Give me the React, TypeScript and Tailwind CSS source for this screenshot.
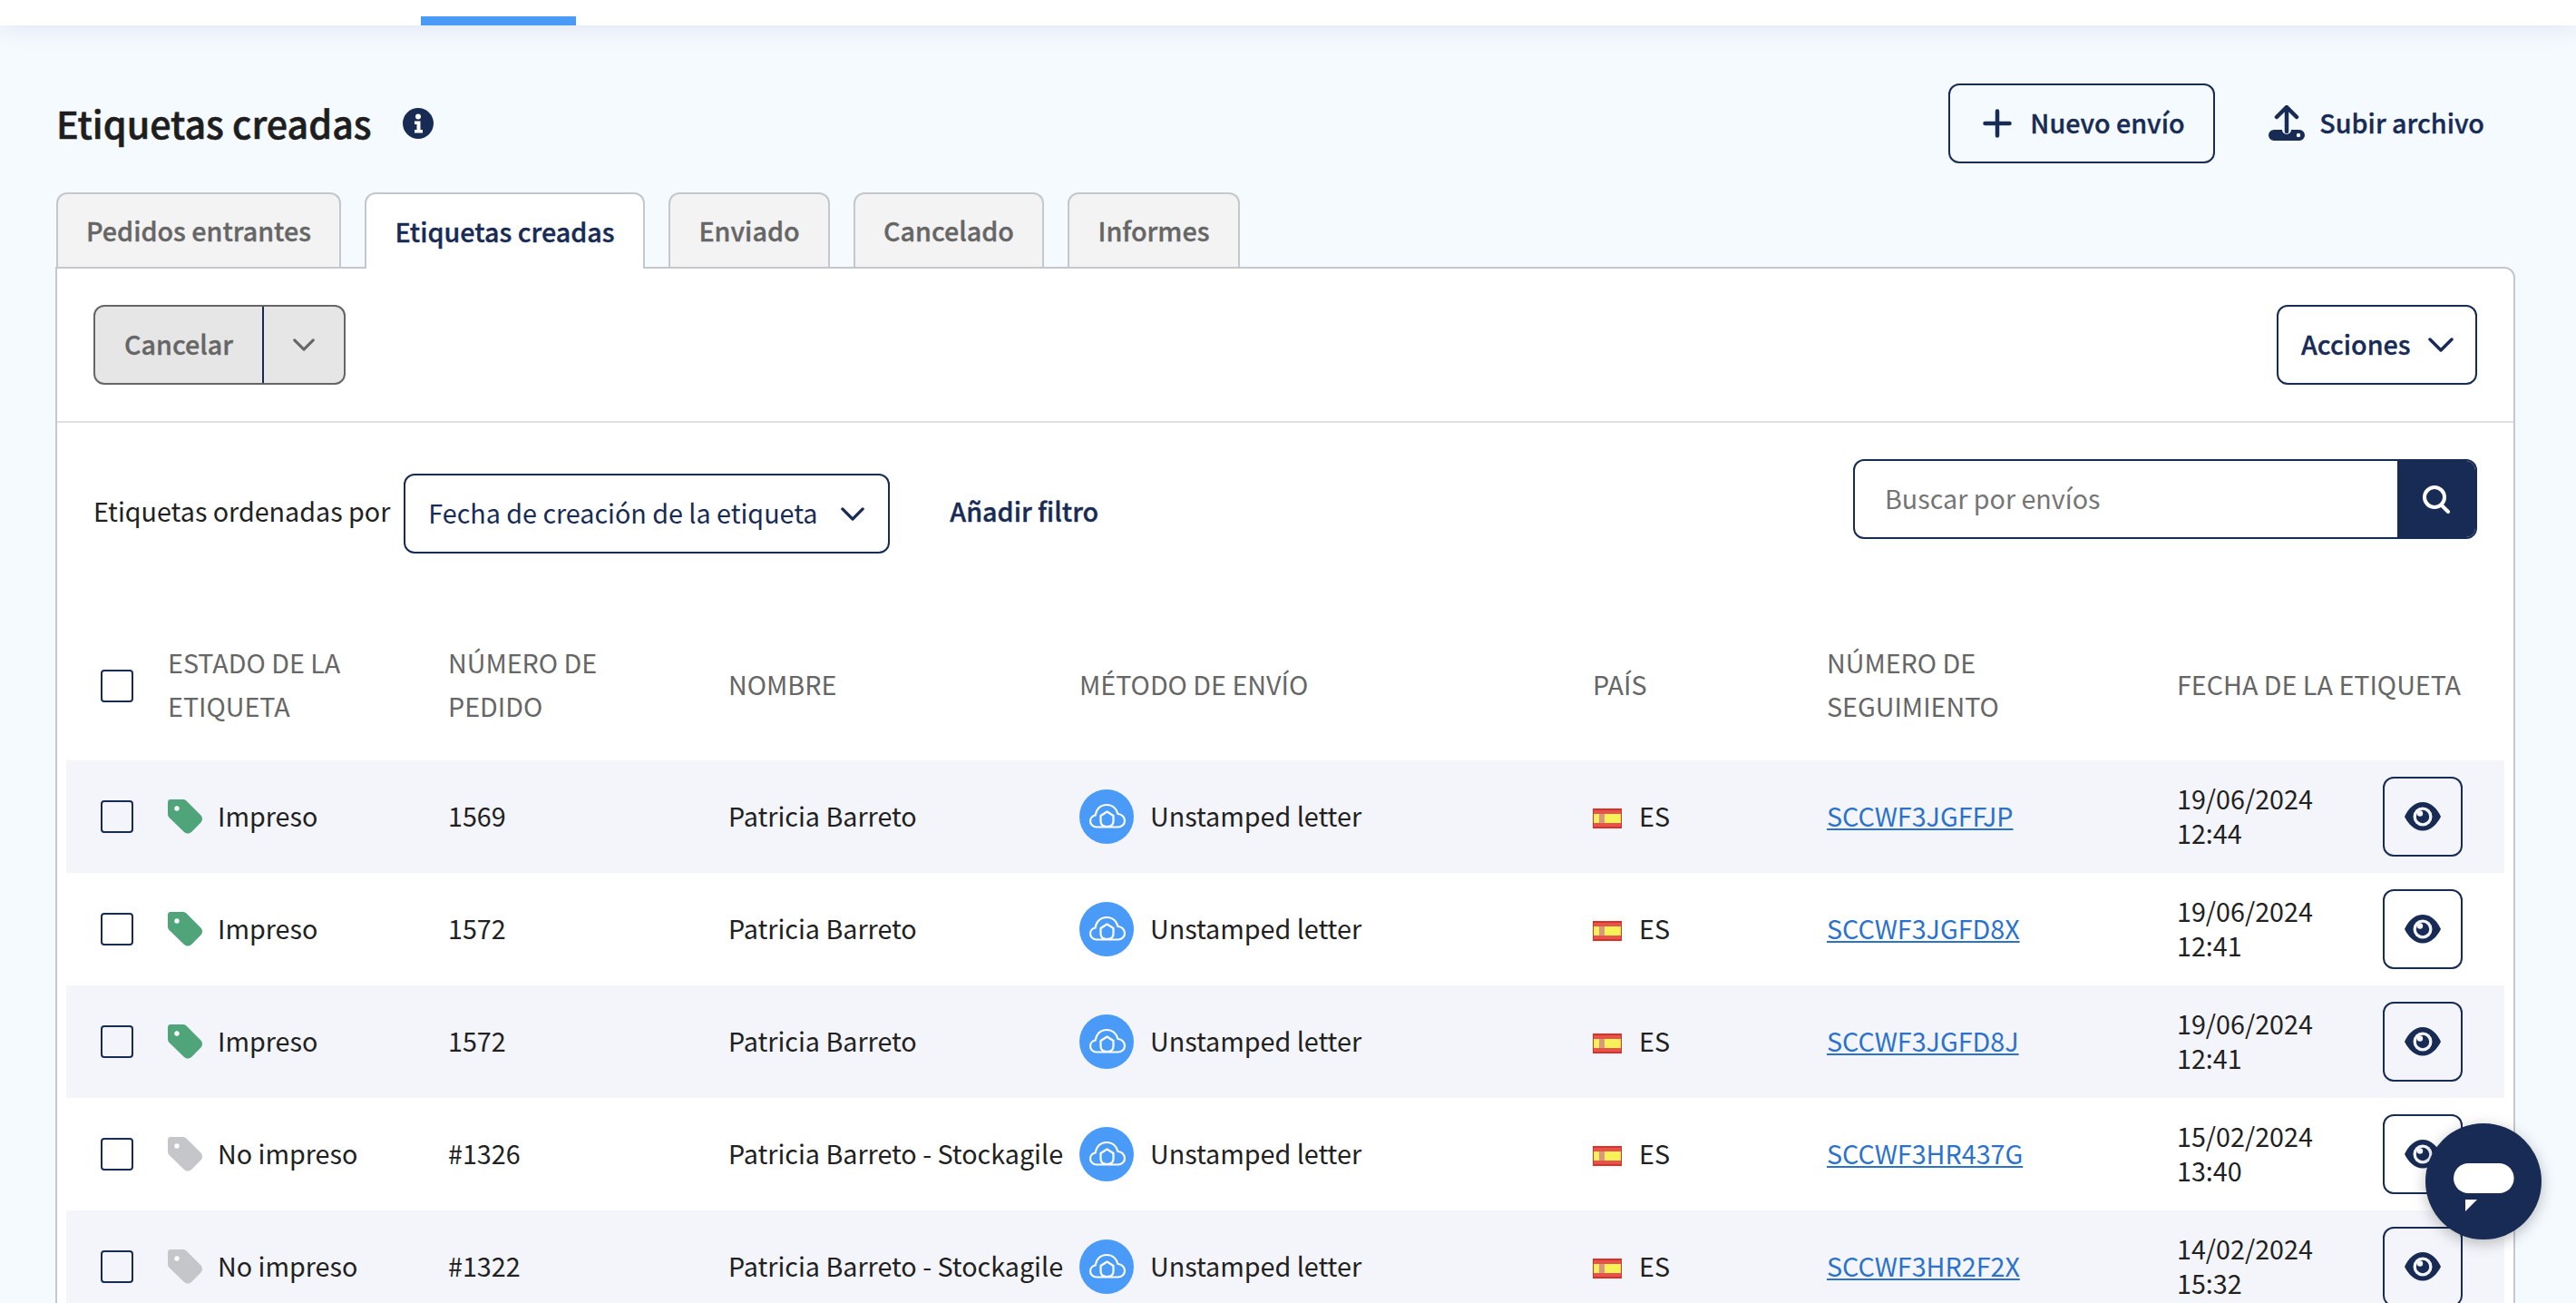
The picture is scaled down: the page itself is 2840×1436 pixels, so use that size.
import React from 'react';

const NAVY = '#172b54';

const rows = [
  { printed: true, order: '1569', name: 'Patricia Barreto', code: 'SCCWF3JGFFJP', date: '19/06/2024', time: '12:44' },
  { printed: true, order: '1572', name: 'Patricia Barreto', code: 'SCCWF3JGFD8X', date: '19/06/2024', time: '12:41' },
  { printed: true, order: '1572', name: 'Patricia Barreto', code: 'SCCWF3JGFD8J', date: '19/06/2024', time: '12:41' },
  { printed: false, order: '#1326', name: 'Patricia Barreto - Stockagile', code: 'SCCWF3HR437G', date: '15/02/2024', time: '13:40' },
  { printed: false, order: '#1322', name: 'Patricia Barreto - Stockagile', code: 'SCCWF3HR2F2X', date: '14/02/2024', time: '15:32' },
];

const gridCols = 'grid grid-cols-[112px_309px_309px_387px_566px_258px_386px_1fr] items-center';
// the heavier labels: medium plus a hair of stroke sits between medium and bold
const strong = 'font-medium [-webkit-text-stroke:0.35px]';

const TagIcon = ({ color }: { color: string }) => (
  <svg viewBox="0 0 38 38" className="w-[38px] h-[38px] shrink-0">
    <path
      d="M3 0h13.500c1.600 0 3.100.6 4.200 1.800l15.500 15.500c2.400 2.400 2.400 6.200 0 8.500L26.300 35.700c-2.400 2.400-6.200 2.400-8.500 0L1.800 20.300C.6 19.200 0 17.700 0 16V3c0-1.700 1.300-3 3-3z"
      fill={color}
    />
    <circle cx="10" cy="10" r="2.700" fill="#fff" />
  </svg>
);

const CloudIcon = () => (
  <svg viewBox="0 0 60 60" className="w-[60px] h-[60px] shrink-0 rounded-full bg-[#4a9bf7]" fill="none" stroke="#fff" strokeWidth="2.200">
    <path d="M22 41.500h-3c-4 0-7-3-7-6.500s2.500-6 5.500-6.500C18.500 22 23 17 30 17c6.500 0 11 4.500 12.500 10 4 .2 7.500 3.500 7.500 7.500 0 4-3.500 7-7.500 7H22z" />
    <path d="M30.500 24.500l7 4.500v6c0 4-3 6-7 6s-7-2-7-6v-6z" strokeLinejoin="round" />
  </svg>
);

const EyeIcon = () => (
  <svg viewBox="0 0 40 32" className="w-[40px] h-[32px]">
    <path d="M20 0C11 0 4 7 0 16c4 8 11 15.500 20 15.500S36 24 40 16C36 7 29 0 20 0z" fill={NAVY} />
    <circle cx="20" cy="16" r="10.500" fill="#f4f5fa" />
    <circle cx="20" cy="16" r="7.200" fill={NAVY} />
    <circle cx="17" cy="12.500" r="3.200" fill="#f4f5fa" />
  </svg>
);

const UploadIcon = () => (
  <svg viewBox="0 0 40 40" className="w-[40px] h-[40px] shrink-0">
    <path d="M20 29V3M9 13L20 2l11 11" fill="none" stroke={NAVY} strokeWidth="4.500" strokeLinecap="round" strokeLinejoin="round" />
    <path d="M6 27h9a5 5 0 0 0 10 0h9a6 6 0 0 1 0 12H6a6 6 0 0 1 0-12z" fill={NAVY} />
    <circle cx="33" cy="33" r="2.200" fill="#fff" />
  </svg>
);

const SearchIcon = () => (
  <svg viewBox="0 0 32 32" className="w-[32px] h-[32px]" fill="none" stroke="#fff" strokeWidth="4" strokeLinecap="round">
    <circle cx="14" cy="14" r="11" />
    <path d="M22 23l7 7" />
  </svg>
);

const PlusIcon = () => (
  <svg viewBox="0 0 32 32" className="w-[32px] h-[32px] shrink-0" stroke={NAVY} strokeWidth="4.500" strokeLinecap="round">
    <path d="M16 2.500v27M2.500 16h27" />
  </svg>
);

const InfoIcon = () => (
  <svg viewBox="0 0 34 34" className="w-[34px] h-[34px] shrink-0">
    <circle cx="17" cy="17" r="17" fill={NAVY} />
    <circle cx="17" cy="9.500" r="3" fill="#fff" />
    <path d="M13 14.500h6.500V24H22v3.500h-9V24h2.500v-6H13z" fill="#fff" />
  </svg>
);

const Chevron = ({ className, color }: { className: string; color: string }) => (
  <svg viewBox="0 0 28 16" className={className} fill="none" stroke={color} strokeWidth="3.500" strokeLinecap="round" strokeLinejoin="round">
    <path d="M2 2l12 12L26 2" />
  </svg>
);

const FlagEs = () => (
  <div className="w-[32px] h-[22px] shrink-0 mt-[4px] flex flex-col border-y-[2px] border-x-[1px] border-[#d9302a] bg-[#e4544c]">
    <div className="h-[4px]" />
    <div className="h-[10px] bg-[#f7f257] pl-[6px]">
      <div className="w-[6px] h-[10px] bg-[#d9977c]" />
    </div>
  </div>
);

const Checkbox = () => <div className="w-[36px] h-[36px] rounded-[4px] border-[2px] border-[#172b54]" />;

const tabs = [
  { label: 'Pedidos entrantes', width: 'w-[314px]' },
  { label: 'Etiquetas creadas', width: 'w-[309px]' },
  { label: 'Enviado', width: 'w-[178px]' },
  { label: 'Cancelado', width: 'w-[210px]' },
  { label: 'Informes', width: 'w-[190px]' },
];

export default function App() {
  return (
    <div
      className="relative h-screen overflow-hidden bg-[#f5faff] text-[#212121] text-[28.7px] leading-[38px]"
      style={{ fontFamily: '"Noto Sans CJK JP", "Open Sans", sans-serif' }}
    >
      <header className="h-[28px] bg-white pl-[464px] flex items-end shadow-[0_6px_24px_rgba(23,43,84,0.08)]">
        <div className="w-[171px] h-[10px] bg-[#4a9bf7]" />
      </header>

      <div className="ml-[61px] w-[2712px]">
        <div className="h-[184px] pt-[64px] pr-[34px]">
          <div className="h-[88px] flex items-center justify-between">
            <div className="flex items-center gap-[34px] pl-[1px]">
              <h1 className="text-[41.200px] leading-[54px] pb-[3px] text-[#1e1e1e] font-medium [-webkit-text-stroke:0.6px]">Etiquetas creadas</h1>
              <InfoIcon />
            </div>
            <div className={`flex items-center text-[#172b54] ${strong}`}>
              <button className="w-[294px] h-[88px] rounded-[12px] border-[2px] border-[#172b54] flex items-center pl-[36px] gap-[20px]">
                <PlusIcon />
                <span className="pb-[3px]">Nuevo envío</span>
              </button>
              <div className="flex items-center gap-[16px] ml-[59px]">
                <UploadIcon />
                <span className="pb-[3px]">Subir archivo</span>
              </div>
            </div>
          </div>
        </div>

        <div className="flex gap-[26px] h-[82px] relative z-10 pl-[1px]">
          {tabs.map((t, i) =>
            i === 1 ? (
              <div key={t.label} className={`${t.width} h-[84px] flex items-center justify-center bg-white text-[#172b54] rounded-t-[12px] border-[2px] border-b-0 border-[#c4c7cc] ${strong}`}>{t.label}</div>
            ) : (
              <div key={t.label} className={`${t.width} h-[82px] flex items-center justify-center bg-[#f3f3f3] text-[#666666] rounded-t-[12px] border-[2px] border-b-0 border-[#c4c7cc] ${strong}`}>{t.label}</div>
            ),
          )}
        </div>

        <div className="bg-white border-[2px] border-[#c4c7cc] rounded-tr-[12px]">
          <div className="h-[170px] border-b-[2px] border-[#dfdfe1] flex items-center justify-between px-[40px]">
            <div className={`w-[278px] h-[88px] flex rounded-[12px] border-[2px] border-[#666666] bg-[#e6e6e6] text-[#666666] ${strong}`}>
              <div className="w-[186px] flex items-center justify-center pb-[3px] border-r-[2px] border-[#172b54]">Cancelar</div>
              <div className="flex-1 flex items-center justify-center">
                <Chevron className="w-[24px] h-[14px]" color="#666666" />
              </div>
            </div>
            <button className={`w-[221px] h-[88px] rounded-[12px] border-[2px] border-[#172b54] flex items-center pl-[25px] gap-[19px] text-[#172b54] ${strong}`}>
              <span className="pb-[3px]">Acciones</span>
              <Chevron className="w-[28px] h-[16px]" color={NAVY} />
            </button>
          </div>

          <div className="h-[240px] flex items-start justify-between px-[40px]">
            <div className="flex items-center mt-[56px]">
              <span className="pb-[6px]">Etiquetas ordenadas por</span>
              <div className="ml-[15px] w-[536px] h-[88px] rounded-[12px] border-[2px] border-[#172b54] flex items-center justify-between pl-[25px] pr-[26px] text-[#172b54]">
                <span className="pb-[3px]">Fecha de creación de la etiqueta</span>
                <Chevron className="w-[26px] h-[15px]" color={NAVY} />
              </div>
              <span className={`ml-[66px] pb-[6px] text-[#172b54] ${strong}`}>Añadir filtro</span>
            </div>
            <div className="mt-[40px] w-[688px] h-[88px] flex rounded-[12px] overflow-hidden border-[2px] border-[#172b54]">
              <div className="flex-1 flex items-center pl-[33px] pb-[3px] text-[#757575]">Buscar por envíos</div>
              <div className="w-[86px] bg-[#172b54] flex items-center justify-center"><SearchIcon /></div>
            </div>
          </div>

          <div className="mx-[10px]">
            <div className={`${gridCols} h-[96px] text-[#666666] leading-[48px]`}>
              <div className="pl-[38px]"><Checkbox /></div>
              <div className="w-[220px] pb-[4px]">ESTADO DE LA ETIQUETA</div>
              <div className="w-[220px] pb-[4px]">NÚMERO DE PEDIDO</div>
              <div className="pb-[4px]">NOMBRE</div>
              <div className="pb-[4px]">MÉTODO DE ENVÍO</div>
              <div className="pb-[4px]">PAÍS</div>
              <div className="w-[240px] pb-[4px]">NÚMERO DE SEGUIMIENTO</div>
              <div className="pb-[4px]">FECHA DE LA ETIQUETA</div>
            </div>
            <div className="mt-[36px]">
              {rows.map((r, i) => (
                <div key={i} className={`${gridCols} h-[124px] ${i % 2 === 0 ? 'bg-[#f4f5fa]' : 'bg-white'}`}>
                  <div className="pl-[38px]"><Checkbox /></div>
                  <div className="flex items-center gap-[17px]">
                    <TagIcon color={r.printed ? '#4fa47a' : '#c4c6c9'} />
                    <span className="pb-[3px]">{r.printed ? 'Impreso' : 'No impreso'}</span>
                  </div>
                  <div className="pb-[3px]">{r.order}</div>
                  <div className="pb-[3px]">{r.name}</div>
                  <div className="flex items-center gap-[18px]">
                    <CloudIcon />
                    <span className="pb-[3px]">Unstamped letter</span>
                  </div>
                  <div className="flex items-center gap-[19px]">
                    <FlagEs />
                    <span className="pb-[3px]">ES</span>
                  </div>
                  <div className="pb-[3px]"><a className="text-[#2b72cc] underline">{r.code}</a></div>
                  <div className="flex items-center justify-between pr-[46px]">
                    <div className="pb-[3px]">{r.date}<br />{r.time}</div>
                    <button className="w-[88px] h-[88px] rounded-[12px] border-[2px] border-[#172b54] flex items-center justify-center"><EyeIcon /></button>
                  </div>
                </div>
              ))}
            </div>
          </div>
        </div>
      </div>

      <div className="absolute left-[2674px] top-[1238px] w-[128px] h-[128px] rounded-full bg-[#172b54] shadow-[0_4px_16px_rgba(0,0,0,0.25)]">
        <svg viewBox="0 0 128 128" className="w-[128px] h-[128px]">
          <rect x="31" y="44" width="66.600" height="33" rx="16.500" fill="#fff" />
          <path d="M44 84h13L44 97z" fill="#fff" />
        </svg>
      </div>
    </div>
  );
}
